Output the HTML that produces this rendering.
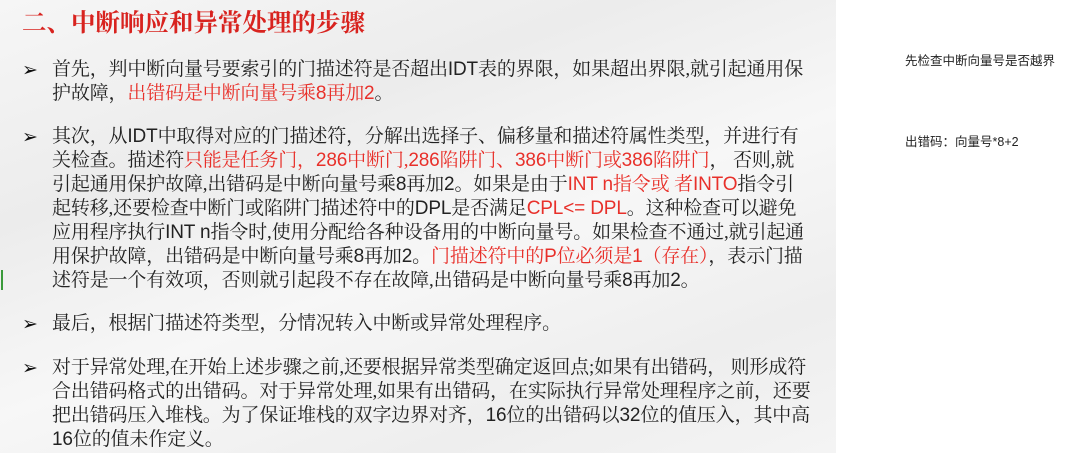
<!DOCTYPE html>
<html><head><meta charset="utf-8"><style>
body{margin:0;width:1088px;height:453px;overflow:hidden;background:#fff;position:relative;font-family:"Liberation Serif","Noto Serif CJK SC",serif;}
#slide{position:absolute;left:0;top:0;width:836px;height:453px;background:linear-gradient(160deg,#f6f6f6 0%,#ececec 30%,#f7f7f7 55%,#eeeeee 80%,#f4f4f4 100%);}
.t{position:absolute;left:22px;top:4px;font-size:24.5px;font-weight:bold;color:#d8231f;white-space:nowrap}
.l{position:absolute;left:52px;font-size:19px;color:#222;white-space:nowrap;line-height:24px;letter-spacing:-0.15px}
.r{color:#e8302a}
.a{font-family:"Liberation Sans",sans-serif;}
.b{position:absolute;left:22px;font-size:19px;color:#111;line-height:24px;font-weight:bold;font-family:"DejaVu Sans",sans-serif}
.n{position:absolute;left:905px;font-family:"Liberation Sans","Noto Sans CJK SC",sans-serif;font-size:12.5px;color:#222;white-space:nowrap}
.g{position:absolute;left:1px;top:270px;width:2px;height:20px;background:#3a9a3a}
</style></head><body>
<div id="slide"></div>
<div class="g"></div>
<div class="t">二、中断响应和异常处理的步骤</div>
<div class="b" style="top:58px">➢</div>
<div class="l" style="top:58px">首先，判中断向量号要索引的门描述符是否超出<span class="a">IDT</span>表的界限，如果超出界限,就引起通用保</div>
<div class="l" style="top:82px">护故障，<span class="r">出错码是中断向量号乘<span class="a">8</span>再加<span class="a">2</span></span>。</div>
<div class="b" style="top:125px">➢</div>
<div class="l" style="top:125px">其次，从<span class="a">IDT</span>中取得对应的门描述符，分解出选择子、偏移量和描述符属性类型，并进行有</div>
<div class="l" style="top:149px">关检查。描述符<span class="r">只能是任务门，<span class="a">286</span>中断门,<span class="a">286</span>陷阱门、<span class="a">386</span>中断门或<span class="a">386</span>陷阱门</span>， 否则,就</div>
<div class="l" style="top:173px">引起通用保护故障,出错码是中断向量号乘<span class="a">8</span>再加<span class="a">2</span>。如果是由于<span class="r"><span class="a">INT n</span>指令或 者<span class="a">INTO</span></span>指令引</div>
<div class="l" style="top:197px">起转移,还要检查中断门或陷阱门描述符中的<span class="a">DPL</span>是否满足<span class="r a">CPL&lt;= DPL</span>。这种检查可以避免</div>
<div class="l" style="top:221px">应用程序执行<span class="a">INT n</span>指令时,使用分配给各种设备用的中断向量号。如果检查不通过,就引起通</div>
<div class="l" style="top:245px">用保护故障，出错码是中断向量号乘<span class="a">8</span>再加<span class="a">2</span>。<span class="r">门描述符中的<span class="a">P</span>位必须是<span class="a">1</span>（存在）</span>，表示门描</div>
<div class="l" style="top:269px">述符是一个有效项，否则就引起段不存在故障,出错码是中断向量号乘<span class="a">8</span>再加<span class="a">2</span>。</div>
<div class="b" style="top:312px">➢</div>
<div class="l" style="top:312px">最后，根据门描述符类型，分情况转入中断或异常处理程序。</div>
<div class="b" style="top:356px">➢</div>
<div class="l" style="top:356px">对于异常处理,在开始上述步骤之前,还要根据异常类型确定返回点;如果有出错码， 则形成符</div>
<div class="l" style="top:380px">合出错码格式的出错码。对于异常处理,如果有出错码，在实际执行异常处理程序之前，还要</div>
<div class="l" style="top:404px">把出错码压入堆栈。为了保证堆栈的双字边界对齐，<span class="a">16</span>位的出错码以<span class="a">32</span>位的值压入，其中高</div>
<div class="l" style="top:428px"><span class="a">16</span>位的值未作定义。</div>
<div class="n" style="top:50px">先检查中断向量号是否越界</div>
<div class="n" style="top:131px">出错码：向量号*8+2</div>
</body></html>
